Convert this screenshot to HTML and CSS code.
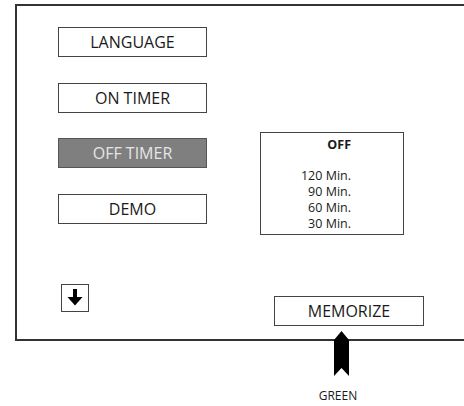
FILE: index.html
```html
<!DOCTYPE html>
<html>
<head>
  <title>Timer Menu</title>
  <link rel="stylesheet" href="styles.css">
</head>
<body>

  <div class="screen">
    <div class="menu">
      <div class="btn">LANGUAGE</div>
      <div class="btn">ON TIMER</div>
      <div class="btn active">OFF TIMER</div>
      <div class="btn">DEMO</div>

      <div class="down">
        <svg width="26" height="26" viewBox="0 0 26 26">
          <rect x="11" y="4" width="4" height="11" fill="#000"/>
          <polygon points="5.5,12 20.5,12 13,20.5" fill="#000"/>
        </svg>
      </div>
    </div>

    <div class="side">
      <div class="options">
        <div class="list">
          <div class="title">OFF</div>
          <div>120 Min.</div>
          <div>90 Min.</div>
          <div>60 Min.</div>
          <div>30 Min.</div>
        </div>
      </div>

      <div class="btn memo">MEMORIZE</div>
    </div>
  </div>

  <div class="pointer">
    <svg width="15" height="45" viewBox="0 0 15 45">
      <polygon points="7.5,0 15,9 15,45 7.5,37 0,45 0,9" fill="#000"/>
    </svg>
    <div class="label">GREEN</div>
  </div>

</body>
</html>
```

FILE: styles.css
```css
body {
  margin: 0;
  font-family: "Open Sans", "DejaVu Sans", sans-serif;
  color: #1a1a1a;
  background: #fff;
  overflow: hidden;
}

.screen {
  display: flex;
  width: 470px;
  height: 333px;
  margin: 4px 0 0 15px;
  border: 2px solid #333;
  border-right: none;
}

.menu {
  display: flex;
  flex-direction: column;
  padding: 21px 0 0 41px;
}

.btn {
  box-sizing: border-box;
  width: 149px;
  height: 30px;
  margin-bottom: 25.5px;
  border: 1px solid #444;
  font-size: 16px;
  line-height: 28px;
  text-align: center;
}

.btn.active {
  background: #7f7f7f;
  border-color: #555;
  color: #e6e6e6;
}

.down {
  box-sizing: border-box;
  width: 28px;
  height: 28px;
  margin: 35px 0 0 3px;
  border: 1px solid #444;
}

.down svg {
  display: block;
}

.side {
  display: flex;
  flex-direction: column;
  padding: 126px 0 0 53px;
}

.options {
  box-sizing: border-box;
  width: 144px;
  height: 103px;
  border: 1px solid #444;
  padding: 4px 0 0 0;
}

.list {
  width: 90px;
  font-size: 12.5px;
  line-height: 16px;
  text-align: right;
}

.list .title {
  font-weight: bold;
  margin-bottom: 15px;
}

.btn.memo {
  width: 150px;
  height: 30px;
  margin: 61px 0 0 14px;
}

.pointer {
  position: relative;
  z-index: 1;
  display: flex;
  flex-direction: column;
  align-items: center;
  width: 60px;
  margin: -10px 0 0 311px;
}

.pointer svg {
  display: block;
}

.label {
  margin: 13px 6px 0 0;
  font-size: 12px;
  line-height: 14px;
}
```
